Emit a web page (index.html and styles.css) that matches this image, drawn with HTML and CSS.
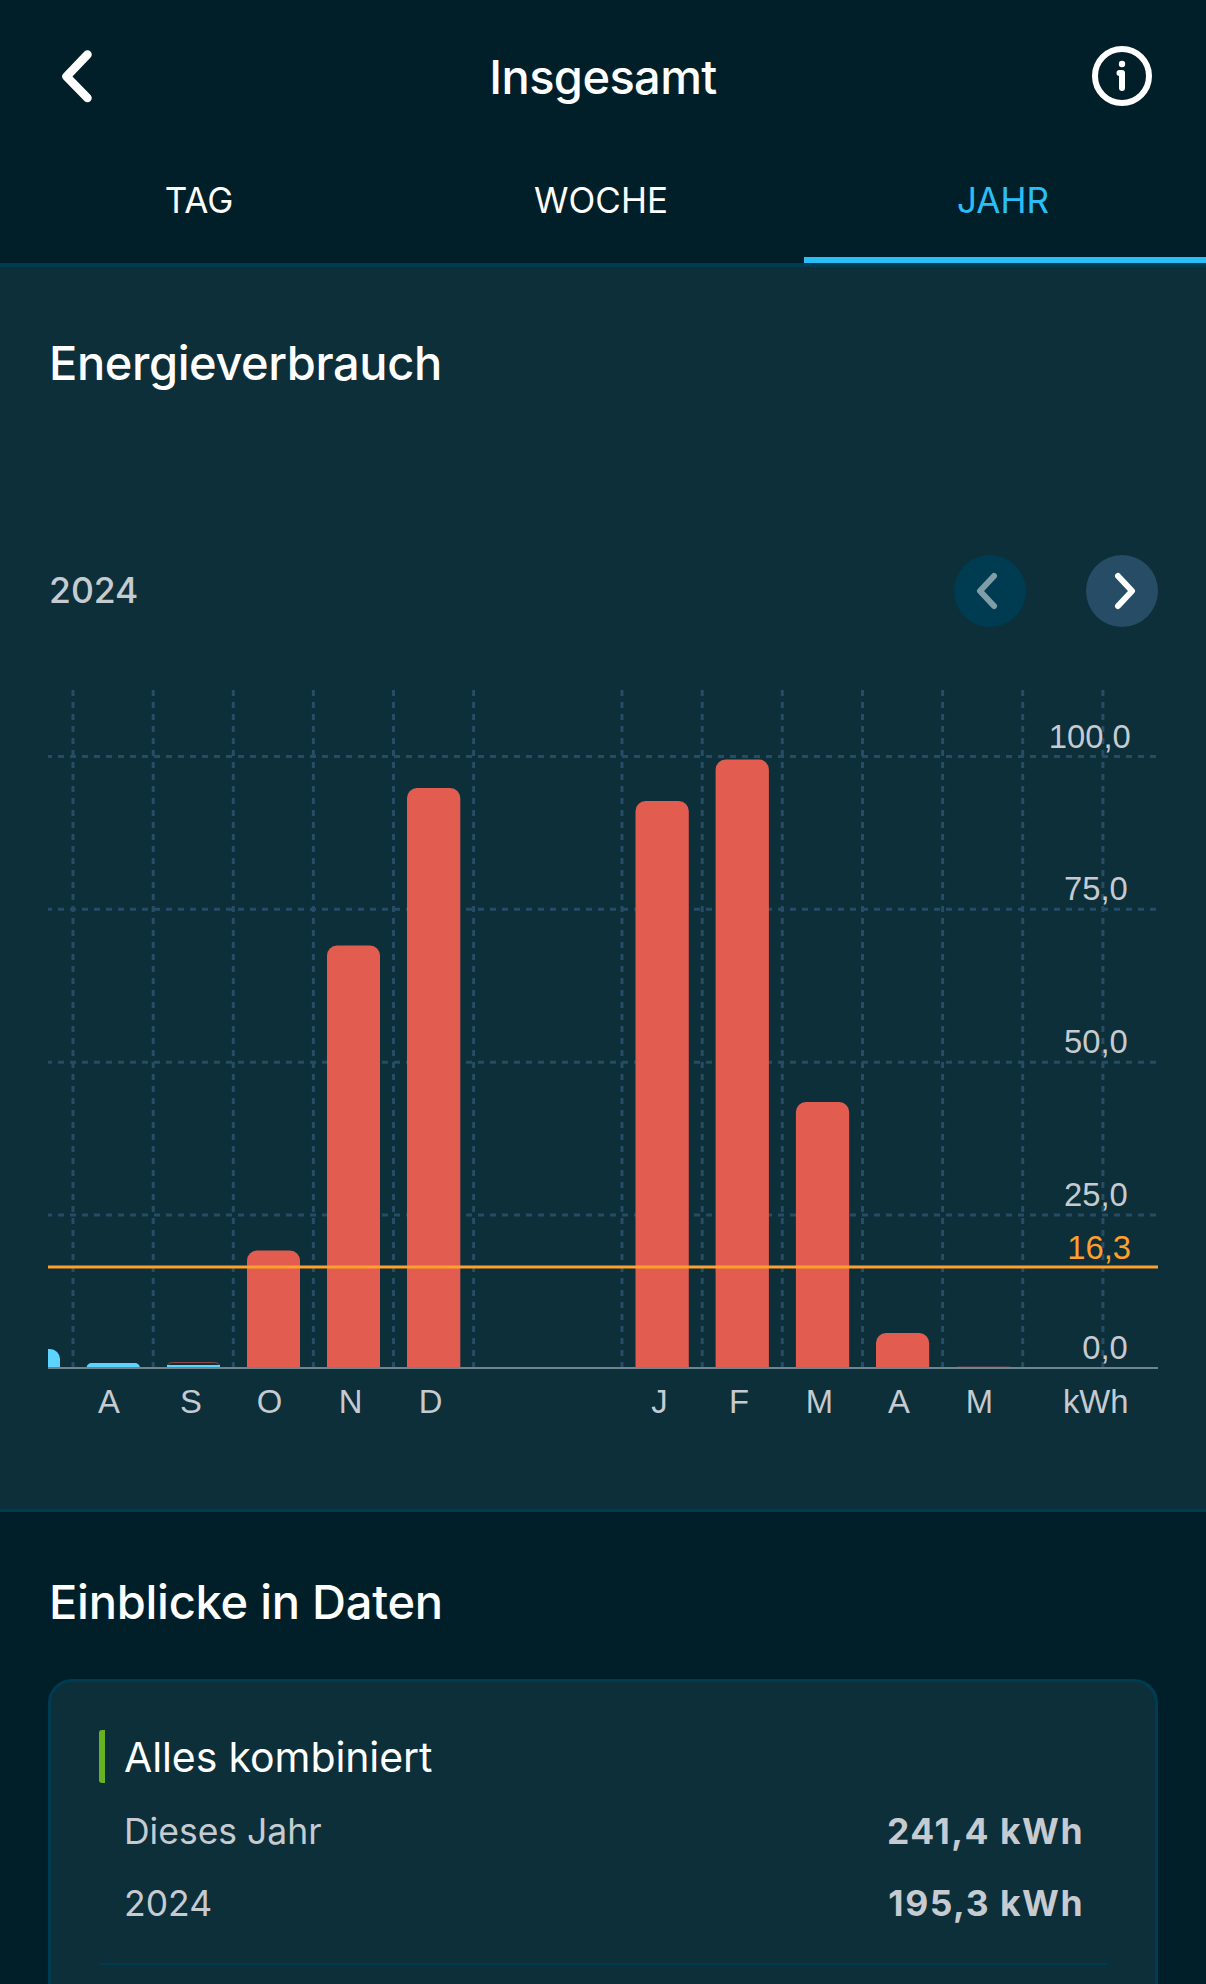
FILE: index.html
```html
<!DOCTYPE html>
<html lang="de">

<head>
    <meta charset="UTF-8">
    <title>Insgesamt</title>
    <link rel="stylesheet" href="styles.css">
</head>

<body>
    <header class="topbar">
        <svg class="icon" width="60" height="60" viewBox="0 0 60 60">
            <polyline points="39.500,8.500 18.500,30.500 39.500,52" />
        </svg>
        <h1>Insgesamt</h1>
        <svg class="icon info" width="60" height="60" viewBox="0 0 60 60">
            <circle cx="30" cy="30" r="27" />
            <path d="M27.500 27h2.500v15" />
            <circle class="dot" cx="30" cy="18" r="3.200" />
        </svg>
    </header>

    <nav class="tabs">
        <div class="tab">TAG</div>
        <div class="tab">WOCHE</div>
        <div class="tab active">JAHR</div>
    </nav>

    <section class="usage">
        <h2>Energieverbrauch</h2>
        <div class="period">
            <span class="year">2024</span>
            <button class="round disabled">
                <svg width="72" height="72" viewBox="0 0 72 72"><polyline points="40,21 26,36 40,51" /></svg>
            </button>
            <button class="round">
                <svg width="72" height="72" viewBox="0 0 72 72"><polyline points="32,21 46,36 32,51" /></svg>
            </button>
        </div>

        <svg class="chart" width="1110" height="750" viewBox="48 690 1110 750">
            <g class="grid">
                <path d="M73 690V1368M153.200 690V1368M233.300 690V1368M313.400 690V1368M393.500 690V1368M473.600 690V1368" />
                <path d="M622 690V1368M702.200 690V1368M782.300 690V1368M862.500 690V1368M942.600 690V1368M1022.700 690V1368M1102.900 690V1368" />
                <path d="M46 756.500H1158M46 909.300H1158M46 1062.200H1158M46 1215H1158" />
            </g>
            <g class="cool">
                <path d="M6 1368V1359a10 10 0 0 1 10-10H50a10 10 0 0 1 10 10V1368z" />
                <path d="M86.500 1368a5 5 0 0 1 5-5h43.500a5 5 0 0 1 5 5z" />
                <path d="M167 1365h53v3h-53z" />
            </g>
            <path class="thin" d="M167.500 1365q1-2.500 5-2.500h42q4 0 5 2.500" />
            <g class="heat">
                <path d="M247 1368V1260.500a10 10 0 0 1 10-10h33a10 10 0 0 1 10 10V1368z" />
                <path d="M327 1368V955.500a10 10 0 0 1 10-10h33a10 10 0 0 1 10 10V1368z" />
                <path d="M407 1368V798a10 10 0 0 1 10-10h33.300a10 10 0 0 1 10 10V1368z" />
                <path d="M635.500 1368V811a10 10 0 0 1 10-10h33.300a10 10 0 0 1 10 10V1368z" />
                <path d="M715.600 1368V769.500a10 10 0 0 1 10-10h33.300a10 10 0 0 1 10 10V1368z" />
                <path d="M795.900 1368V1112a10 10 0 0 1 10-10h33.300a10 10 0 0 1 10 10V1368z" />
                <path d="M876 1368V1343a10 10 0 0 1 10-10h33.200a10 10 0 0 1 10 10V1368z" />
            </g>
            <path class="thin faint" d="M957 1366.500h53" />
            <path class="base" d="M48 1368H1158" />
            <path class="average" d="M48 1267H1158" />
            <g class="months">
                <text x="109" y="1413">A</text>
                <text x="191" y="1413">S</text>
                <text x="269.500" y="1413">O</text>
                <text x="350.500" y="1413">N</text>
                <text x="430.500" y="1413">D</text>
                <text x="659.500" y="1413">J</text>
                <text x="739" y="1413">F</text>
                <text x="819.500" y="1413">M</text>
                <text x="899" y="1413">A</text>
                <text x="979.500" y="1413">M</text>
            </g>
            <g class="values">
                <text x="1130.800" y="748">100,0</text>
                <text x="1127.800" y="900">75,0</text>
                <text x="1127.800" y="1053">50,0</text>
                <text x="1127.800" y="1206">25,0</text>
                <text class="avg" x="1131" y="1259">16,3</text>
                <text x="1127.800" y="1359">0,0</text>
                <text x="1128.500" y="1413">kWh</text>
            </g>
        </svg>
    </section>

    <section class="insights">
        <h2>Einblicke in Daten</h2>
        <div class="card">
            <h3>Alles kombiniert</h3>
            <div class="row"><span>Dieses Jahr</span><b>241,4 kWh</b></div>
            <div class="row"><span>2024</span><b>195,3 kWh</b></div>
            <hr>
        </div>
    </section>
</body>

</html>
```

FILE: styles.css
```css
* {
    box-sizing: border-box;
}

body {
    margin: 0;
    height: 1984px;
    overflow: hidden;
    background: #011f29;
    color: #fff;
    font-family: Inter, sans-serif;
}

h1, h2, h3 {
    margin: 0;
    font-weight: 500;
    line-height: 60px;
}

h1, h2 {
    font-size: 47px;
}

h2 {
    padding-left: 1px;
    letter-spacing: -0.4px;
}

.topbar {
    display: flex;
    justify-content: space-between;
    align-items: center;
    height: 137px;
    padding: 16px 54px 1px 48px;
}

.topbar h1 {
    padding: 2px 0 0 6px;
    letter-spacing: -0.6px;
}

.icon, .round svg {
    fill: none;
    stroke: #fff;
    stroke-width: 8.5;
    stroke-linecap: round;
    stroke-linejoin: round;
}

.icon.info {
    stroke-width: 6;
}

.icon .dot {
    fill: #fff;
    stroke: none;
}

.tabs {
    display: grid;
    grid-template-columns: repeat(3, 402px);
    height: 126px;
    line-height: 127px;
    font-size: 35px;
    text-align: center;
}

.tab {
    height: 126px;
    padding-right: 4px;
}

.tab.active {
    color: #29c0fa;
    box-shadow: inset 0 -6px #29c0fa;
}

.usage {
    height: 1249px;
    padding: 66px 48px 0;
    background: #0c2f3a;
    border-top: 4px solid #003c51;
    border-bottom: 3px solid #003c51;
}

.period {
    display: flex;
    align-items: center;
    gap: 60px;
    height: 72px;
    margin: 162px 0 63px;
}

.year {
    margin-right: auto;
    padding: 0 0 1px 1px;
    color: #c5cbd0;
    font-size: 35.5px;
    font-weight: 500;
}

.round {
    width: 72px;
    height: 72px;
    padding: 0;
    border: 0;
    border-radius: 50%;
    background: #264d65;
}

.round svg {
    display: block;
    stroke-width: 6;
}

.round.disabled {
    background: #003c51;
}

.round.disabled svg {
    stroke: #809da8;
}

.chart {
    display: block;
    font: 32.8px "Liberation Sans", Arial, sans-serif;
    fill: #c5cbd0;
}

.grid {
    stroke: #264d65;
    stroke-width: 3;
    stroke-dasharray: 6 6;
}

.cool {
    fill: #5bd5ff;
}

.heat {
    fill: #e25c50;
}

.thin {
    fill: none;
    stroke: #8b4846;
}

.faint {
    opacity: 0.4;
}

.base {
    stroke: #6f858d;
    stroke-width: 2;
}

.average {
    stroke: #ff9f2d;
    stroke-width: 3;
}

.months {
    text-anchor: middle;
}

.values {
    text-anchor: end;
}

.avg {
    fill: #ff9f2d;
}

.insights {
    padding: 60px 48px 0;
}

.insights h2 {
    letter-spacing: -0.25px;
}

.card {
    height: 400px;
    margin-top: 47px;
    padding: 48px 48px 0;
    background: #0c2f3a;
    border: 3px solid #003c51;
    border-radius: 24px;
}

.card h3 {
    height: 53px;
    margin-bottom: 12px;
    padding-left: 19px;
    border-left: 6px solid #66b221;
    border-radius: 3px;
    font-size: 41px;
    font-weight: 400;
    line-height: 54px;
    letter-spacing: -0.1px;
}

.row {
    display: flex;
    justify-content: space-between;
    height: 72px;
    padding: 0 23px 0 25px;
    color: #c5cbd0;
    font-size: 35.5px;
    line-height: 74px;
}

.row b {
    letter-spacing: 1.5px;
}

hr {
    height: 2px;
    margin: 24px 0 0;
    border: 0;
    background: #003c51;
}
```
